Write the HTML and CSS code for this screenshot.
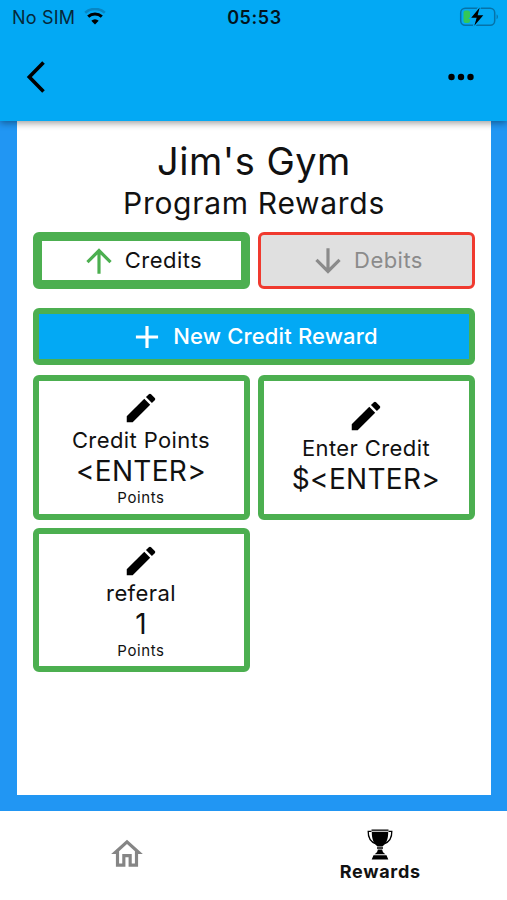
FILE: index.html
```html
<!DOCTYPE html>
<html lang="en">
<head>
    <meta charset="utf-8">
    <title>Program Rewards</title>
    <link rel="stylesheet" href="styles.css">
</head>
<body>
    <header class="header">
        <div class="status">
            <div class="carrier">
                <span class="sim">No SIM</span>
                <svg class="wifi" width="22" height="18" viewBox="0 0 22 18">
                    <path d="M1.200 4.800a14.500 14.500 0 0 1 19.600 0" fill="none" stroke="#0786c4" stroke-width="2.600"/>
                    <path d="M4.200 8.700a10 10 0 0 1 13.600 0" fill="none" stroke="#000" stroke-width="3"/>
                    <path d="M11 16.500l-3.700-3.800a5.300 5.300 0 0 1 7.400 0z"/>
                </svg>
            </div>
            <span class="time">05:53</span>
            <svg class="battery" width="40" height="22" viewBox="0 0 40 22">
                <rect x="1.700" y="3.200" width="34" height="17" rx="4.500" fill="none" stroke="#0672a8" stroke-width="1.500"/>
                <path d="M37.600 9.500c1.700.7 1.700 4 0 4.700z" fill="#0672a8"/>
                <rect x="4.500" y="5.500" width="6.500" height="12.500" rx="2" fill="#33c759"/>
                <path d="M21 1.500L11.500 13h5.500l-2.200 8.500L25 10h-5.800z" stroke="#03a9f4" stroke-width="2"/>
                <path d="M20.700 2.500L12.200 12.700h5.500l-2.400 8L24.300 10.300h-5.700z"/>
            </svg>
        </div>
        <div class="toolbar">
            <svg class="back" width="20" height="32" viewBox="0 0 20 32">
                <path d="M17.500 1.500L3.300 16l14.200 14.500" fill="none" stroke="#000" stroke-width="3.600"/>
            </svg>
            <svg class="more" width="27" height="8" viewBox="0 0 27 8">
                <circle cx="3.500" cy="4" r="3.200"/>
                <circle cx="13" cy="4" r="3.200"/>
                <circle cx="22.500" cy="4" r="3.200"/>
            </svg>
        </div>
    </header>

    <main class="main">
        <div class="panel">
            <h1>Jim's Gym</h1>
            <h2>Program Rewards</h2>
            <div class="tabs">
                <button class="tab credits">
                    <svg class="icon" viewBox="0 0 24 24"><path d="M4 12l1.410 1.410L11 7.830V20h2V7.830l5.580 5.590L20 12l-8-8z"/></svg>
                    <span>Credits</span>
                </button>
                <button class="tab debits">
                    <svg class="icon" viewBox="0 0 24 24"><path d="M20 12l-1.410-1.410L13 16.170V4h-2v12.170l-5.580-5.590L4 12l8 8z"/></svg>
                    <span>Debits</span>
                </button>
            </div>
            <button class="new-reward">
                <svg class="icon" viewBox="0 0 24 24"><path d="M19 13h-6v6h-2v-6H5v-2h6V5h2v6h6z"/></svg>
                <span>New Credit Reward</span>
            </button>
            <div class="rewards">
                <div class="card">
                    <svg class="icon" viewBox="0 0 24 24"><path d="M3 17.250V21h3.750L17.810 9.940l-3.750-3.750zM20.710 7.040a1 1 0 0 0 0-1.410l-2.340-2.340a1 1 0 0 0-1.410 0l-1.830 1.830 3.750 3.750z"/></svg>
                    <span class="name">Credit Points</span>
                    <span class="value">&lt;ENTER&gt;</span>
                    <span class="unit">Points</span>
                </div>
                <div class="card">
                    <svg class="icon" viewBox="0 0 24 24"><path d="M3 17.250V21h3.750L17.810 9.940l-3.750-3.750zM20.710 7.040a1 1 0 0 0 0-1.410l-2.340-2.340a1 1 0 0 0-1.410 0l-1.830 1.830 3.750 3.750z"/></svg>
                    <span class="name">Enter Credit</span>
                    <span class="value">$&lt;ENTER&gt;</span>
                </div>
                <div class="card">
                    <svg class="icon" viewBox="0 0 24 24"><path d="M3 17.250V21h3.750L17.810 9.940l-3.750-3.750zM20.710 7.040a1 1 0 0 0 0-1.410l-2.340-2.340a1 1 0 0 0-1.410 0l-1.830 1.830 3.750 3.750z"/></svg>
                    <span class="name">referal</span>
                    <span class="value">1</span>
                    <span class="unit">Points</span>
                </div>
            </div>
        </div>
    </main>

    <nav class="bottom-nav">
        <a class="nav-item home">
            <svg class="icon" viewBox="0 0 24 24"><path d="M12 5.690l5 4.500V18h-2v-6H9v6H7v-7.810zM12 3L2 12h3v8h6v-6h2v6h6v-8h3z"/></svg>
        </a>
        <a class="nav-item active">
            <svg class="trophy" width="26" height="31" viewBox="0 0 26 31">
                <path d="M4.500 2.300H1.200c-.2 6 1.300 10.300 7.800 12.700M21.500 2.300h3.300c.2 6-1.300 10.300-7.800 12.700" fill="none" stroke="#000" stroke-width="1.300"/>
                <path d="M4.500.5h17v1.300h-17z"/>
                <path d="M4.800 2.700h16.400c.1 6.500-1.300 11-5.700 14.700h-5c-4.400-3.700-5.800-8.200-5.700-14.700z"/>
                <path d="M10 18.300h6v1.400h-6zM10.800 20.500h4.400c.2 2.200 1.200 3.600 3.300 4.700h-11c2.100-1.100 3.100-2.500 3.300-4.700zM6.500 26.200h13l1.800 4.300H4.700z"/>
            </svg>
            <span>Rewards</span>
        </a>
    </nav>
</body>
</html>
```
FILE: styles.css
```css
* { box-sizing: border-box; }
body { font-family: Inter, sans-serif; background: #fff; color: #111; margin: 0; height: 900px; display: flex; flex-direction: column; }
h1, h2 { font-weight: 400; text-align: center; white-space: nowrap; margin: 0; }
h1 { font-size: 38px; line-height: 46px; letter-spacing: 0.5px; }
h2 { font-size: 30px; line-height: 39px; letter-spacing: 0.7px; }
button { font-family: inherit; cursor: pointer; padding: 0; display: flex; align-items: center; justify-content: center; gap: 7px; height: 57px; border-radius: 6px; font-size: 22px; letter-spacing: 0.45px; white-space: nowrap; }
button span { padding-bottom: 2px; }
.icon { width: 38px; height: 38px; fill: currentColor; flex: none; }

.header { height: 121px; flex: none; background: #03a9f4; box-shadow: 0 2px 7px rgba(0, 0, 0, 0.4); position: relative; }
.status { height: 34px; padding: 0 8px 0 12px; display: grid; grid-template-columns: 1fr auto 1fr; align-items: center; }
.carrier { display: flex; align-items: center; gap: 9px; font-size: 18px; letter-spacing: 0.2px; color: #06293b; }
.time { font-size: 18px; font-weight: 600; letter-spacing: 0.6px; margin-right: 2px; color: #02141d; }
.battery { justify-self: end; margin-top: -2px; }
.toolbar { height: 86px; padding: 0 32px 0 26px; display: flex; align-items: center; justify-content: space-between; }

.main { height: 690px; flex: none; background: #2196f3; padding: 0 16px 16px 17px; }
.panel { height: 674px; background: #fff; padding: 17px 16px; }
.tabs { display: grid; grid-template-columns: 1fr 1fr; gap: 8px; margin-top: 9px; }
.tab { background: #fff; color: #111; padding-right: 1px; }
.credits { border: 9px solid #4caf50; }
.credits .icon { color: #4caf50; }
.debits { background: #e0e0e0; border: 3px solid #f03a2f; color: #8b8b8b; }
.new-reward { width: 100%; margin-top: 19px; padding-right: 2px; background: #03a9f4; color: #fff; border: 6px solid #4caf50; font-weight: 500; letter-spacing: 0.15px; }

.rewards { display: grid; grid-template-columns: 1fr 1fr; gap: 8px; margin-top: 10px; }
.card { height: 144.5px; border: 6px solid #4caf50; border-radius: 6px; padding: 1px 1px 0 0; display: flex; flex-direction: column; align-items: center; justify-content: center; }
.card .icon { color: #000; }
.name { font-size: 22px; line-height: 26px; letter-spacing: 0.4px; }
.value { font-size: 28px; line-height: 37px; letter-spacing: 0.3px; }
.unit { font-size: 15px; line-height: 16px; letter-spacing: 0.6px; }

.bottom-nav { height: 89px; flex: none; display: grid; grid-template-columns: 1fr 1fr; }
.nav-item { display: flex; flex-direction: column; align-items: center; justify-content: center; }
.home { color: #858585; padding-bottom: 3px; }
.active { font-size: 18px; font-weight: 700; line-height: 23px; letter-spacing: 0.7px; }
```
